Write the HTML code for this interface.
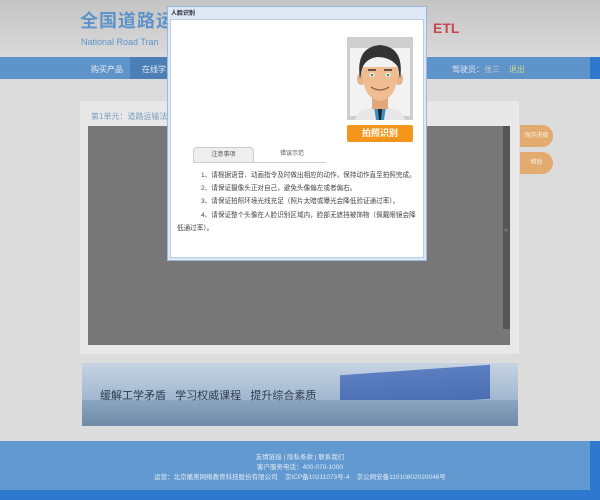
<!DOCTYPE html>
<html><head><meta charset="utf-8"><style>
*{margin:0;padding:0;box-sizing:border-box}
body{width:600px;height:500px;overflow:hidden;position:relative;background:#dcdcdc;font-family:"Liberation Sans","Noto Sans CJK SC",sans-serif}
.a{position:absolute}
</style></head><body>
<div class="a" style="left:0;top:0;width:600px;height:57px;background:linear-gradient(#c4c4c4,#dadada)"></div>
<div class="a" style="left:80px;top:10px;font-size:18px;line-height:22px;font-weight:bold;color:#5d93c9;letter-spacing:1px">全国道路运</div>
<div class="a" style="left:81px;top:37px;font-size:9px;line-height:11px;color:#5d93c9">National Road Tran</div>
<div class="a" style="left:433px;top:20px;font-size:14px;font-weight:bold;color:#c9464e">ETL</div>
<div class="a" style="left:0;top:57px;width:590px;height:22px;background:#5f94cb"></div>
<div class="a" style="left:590px;top:57px;width:10px;height:22px;background:#2f78cf"></div>
<div class="a" style="left:130px;top:57px;width:40px;height:22px;background:#4c7fb5"></div>
<div class="a" style="left:91px;top:64px;font-size:8px;color:#e6ecf4">购买产品</div>
<div class="a" style="left:142px;top:64px;font-size:8px;color:#e6ecf4">在线学习</div>
<div class="a" style="left:452px;top:64px;font-size:8px;color:#dfe6ef">驾驶员：<span style="color:#c8c8c8">张三</span>&nbsp;&nbsp;&nbsp;&nbsp;<span style="color:#c6dc8a">退出</span></div>
<div class="a" style="left:80px;top:101px;width:439px;height:253px;background:#e8e8e8"></div>
<div class="a" style="left:91px;top:111px;font-size:8px;color:#7a9cc0">第1单元：道路运输法规</div>
<div class="a" style="left:88px;top:126px;width:422px;height:219px;background:#777"></div>
<div class="a" style="left:503px;top:126px;width:7px;height:203px;background:#555"></div>
<div class="a" style="left:504px;top:227px;font-size:7px;color:#7aa0c8">«</div>
<div class="a" style="left:520px;top:125px;width:33px;height:22px;background:#e3ab6f;border-radius:0 11px 11px 0;font-size:6px;color:#f8eee0;text-align:center;line-height:22px">保存进度</div>
<div class="a" style="left:520px;top:152px;width:33px;height:22px;background:#e3ab6f;border-radius:0 11px 11px 0;font-size:6px;color:#f8eee0;text-align:center;line-height:22px">帮助</div>
<div class="a" style="left:81px;top:361px;width:438px;height:66px;background:#ddd"></div>
<div class="a" style="left:82px;top:363px;width:436px;height:63px;background:linear-gradient(180deg,#c6d3e3,#9fb6cf 60%,#7b97b6)"></div>
<div class="a" style="left:340px;top:370px;width:150px;height:34px;background:linear-gradient(#5a7ec0,#4b6fb2);transform:skewY(-4deg)"></div>
<div class="a" style="left:82px;top:400px;width:436px;height:26px;background:linear-gradient(#8ba6c0,#6d8aa8)"></div>
<div class="a" style="left:100px;top:387px;font-size:11px;color:#2f3b4a">缓解工学矛盾&nbsp;&nbsp;&nbsp;学习权威课程&nbsp;&nbsp;&nbsp;提升综合素质</div>
<div class="a" style="left:0;top:441px;width:590px;height:50px;background:#6299d0"></div>
<div class="a" style="left:590px;top:441px;width:10px;height:59px;background:#2f78cf"></div>
<div class="a" style="left:0;top:490px;width:600px;height:10px;background:#2f78cf"></div>
<div class="a" style="left:0;top:453px;width:600px;text-align:center;font-size:6.5px;color:#e2eaf4;line-height:10px">友情链接 | 隐私条款 | 联系我们<br>客户服务电话：400-070-1000<br>运营：北京播奥网络教育科技股份有限公司&nbsp;&nbsp;&nbsp;&nbsp;京ICP备10211073号-4&nbsp;&nbsp;&nbsp;&nbsp;京公网安备11010802020046号</div>
<div class="a" style="left:167px;top:6px;width:260px;height:255px;background:#dfe9f5;border:1px solid #9db8d8"></div>
<div class="a" style="left:171px;top:8px;font-size:6px;font-weight:bold;color:#223">人脸识别</div>
<div class="a" style="left:170px;top:19px;width:254px;height:239px;background:#fff;border:1px solid #b9cde4"></div>
<div class="a" style="left:347px;top:37px;width:66px;height:83px;background:#cfcfcf"></div>
<div class="a" style="left:350px;top:48px;width:60px;height:68px;background:#f2f2f2"></div>
<svg class="a" style="left:347px;top:37px" width="66" height="83" viewBox="0 0 66 83">
<path d="M8 83 L12 74 Q33 66 54 74 L58 83Z" fill="#e8e8e8"/>
<path d="M27 70 L39 70 L37 83 L29 83Z" fill="#3b8fc4"/>
<path d="M31 72 L35 72 L34 83 L32 83Z" fill="#222"/>
<rect x="25" y="58" width="16" height="14" fill="#e0a878"/>
<ellipse cx="14" cy="42" rx="4" ry="6" fill="#e9b489"/>
<ellipse cx="52" cy="42" rx="4" ry="6" fill="#e9b489"/>
<path d="M15 30 Q15 62 33 64 Q51 62 51 30Z" fill="#f0bd92"/>
<path d="M13 42 Q8 10 33 8 Q58 10 53 42 L51 30 Q44 20 30 20 Q18 22 15 32Z" fill="#333"/>
<ellipse cx="25" cy="38" rx="2.5" ry="2" fill="#fff"/><circle cx="25" cy="38" r="1.3" fill="#2a9a5a"/>
<ellipse cx="41" cy="38" rx="2.5" ry="2" fill="#fff"/><circle cx="41" cy="38" r="1.3" fill="#2a9a5a"/>
<path d="M21 33 L29 33 M37 33 L45 33" stroke="#333" stroke-width="1.5"/>
<path d="M24 50 Q33 56 42 50" stroke="#8a5a3a" stroke-width="1.2" fill="none"/>
</svg>
<div class="a" style="left:347px;top:125px;width:66px;height:17px;background:#f4961c;border-radius:2px;color:#fff;font-size:9px;font-weight:bold;text-align:center;line-height:17px">拍照识别</div>
<div class="a" style="left:193px;top:147px;width:61px;height:15px;background:#eee;border:1px solid #ccc;border-bottom:none;border-radius:4px 4px 0 0;font-size:6px;color:#555;text-align:center;line-height:15px">注意事项</div>
<div class="a" style="left:258px;top:147px;width:68px;height:15px;font-size:6px;color:#555;text-align:center;line-height:15px">错误示范</div>
<div class="a" style="left:193px;top:162px;width:133px;height:1px;background:#ccc"></div>
<div class="a" style="left:177px;top:169px;width:240px;font-size:6.6px;color:#444;line-height:13.2px">
<div style="text-indent:24px">1、请根据语音、动画指令及时做出相应的动作，保持动作直至拍照完成。</div>
<div style="text-indent:24px">2、请保证摄像头正对自己，避免头像偏左或者偏右。</div>
<div style="text-indent:24px">3、请保证拍照环境光线充足（照片太暗或曝光会降低验证通过率）。</div>
<div style="text-indent:24px">4、请保证整个头像在人脸识别区域内，脸部无遮挡被饰物（佩戴眼镜会降低通过率）。</div>
</div>
</body></html>
